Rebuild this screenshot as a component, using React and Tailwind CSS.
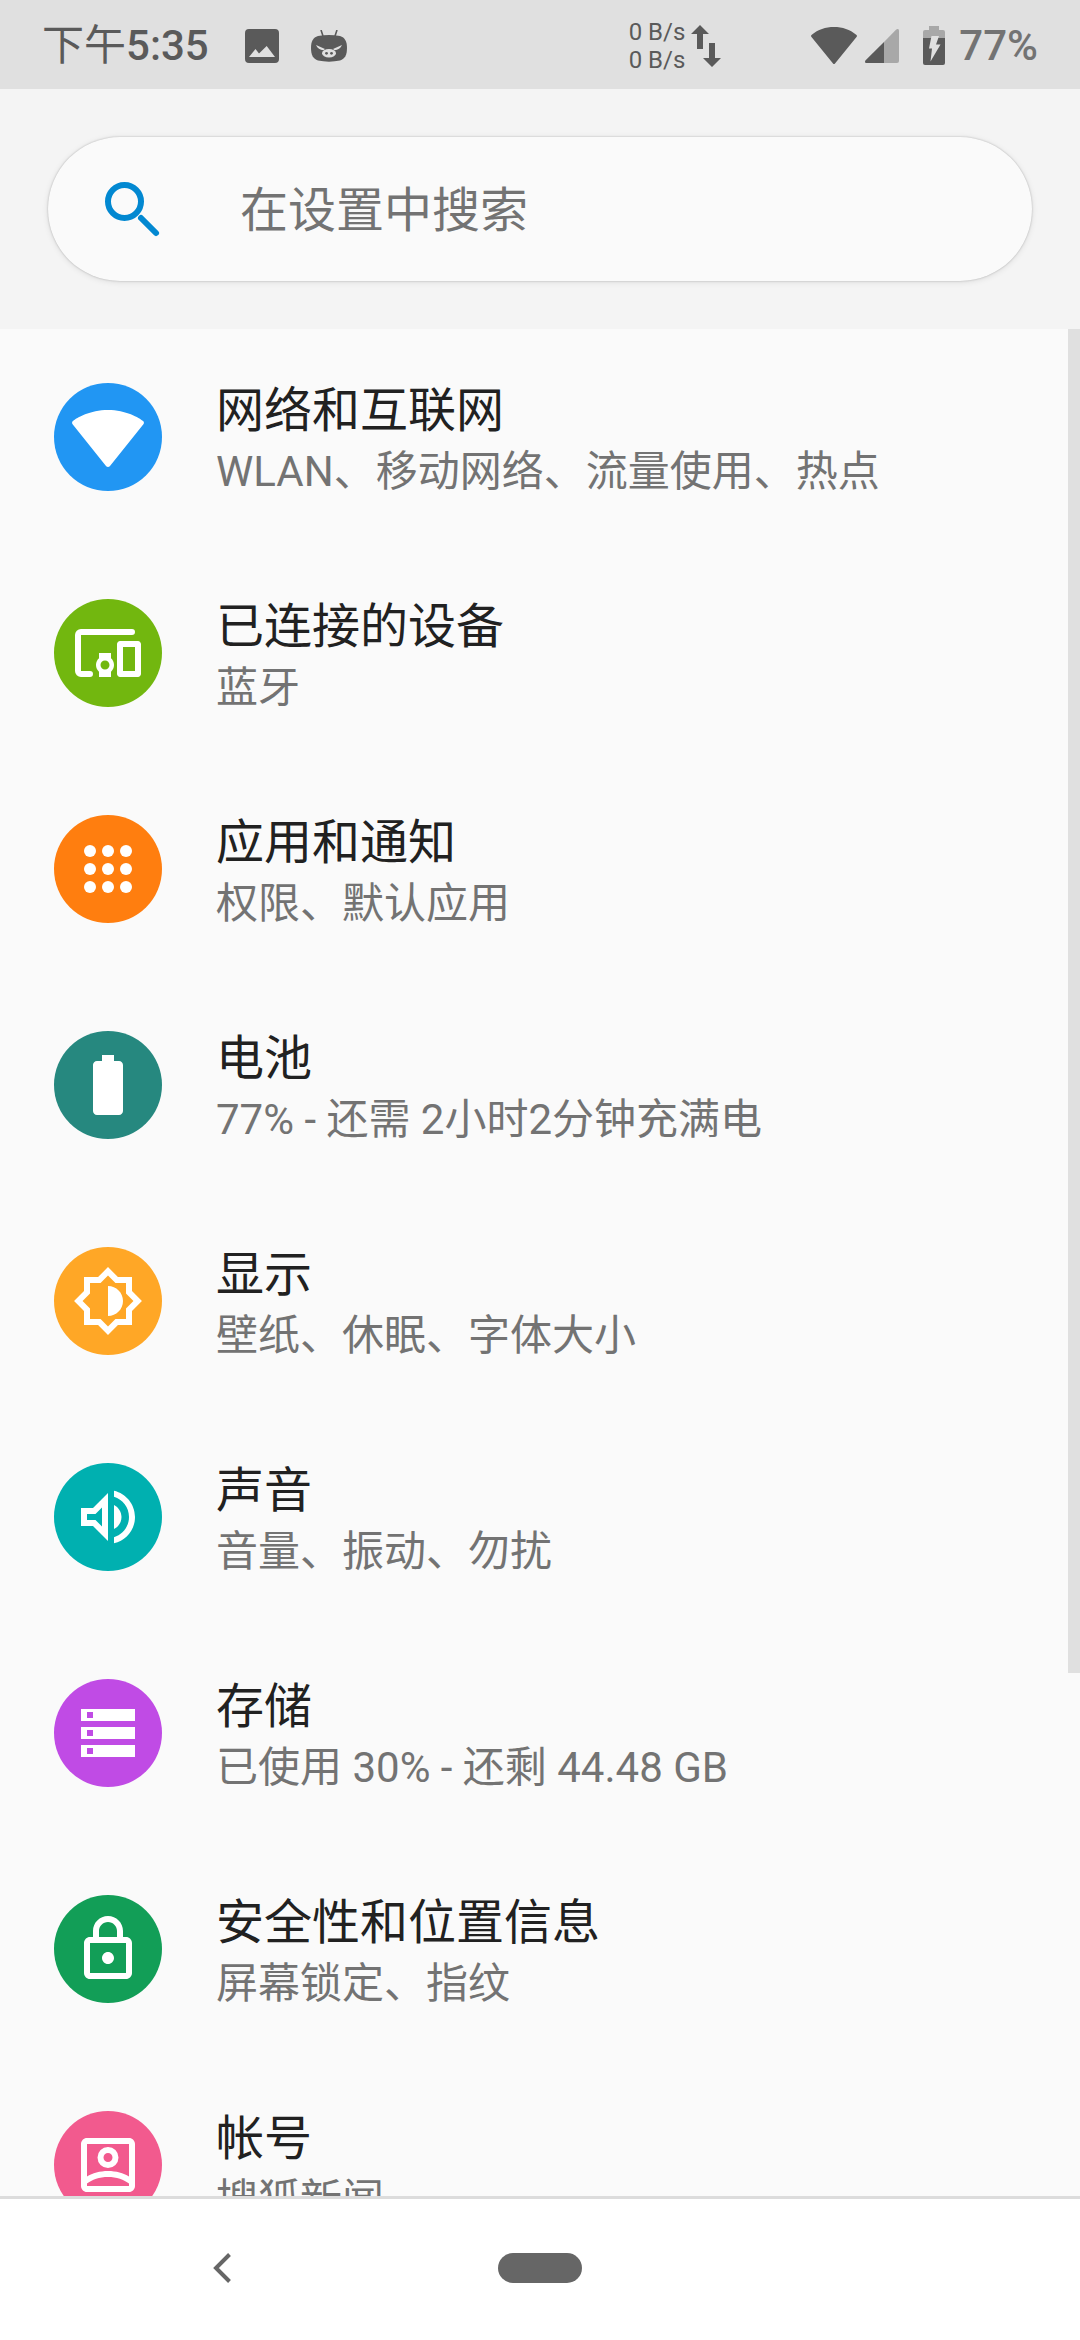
import React, { useState } from 'react';

const ICON_PATHS = {
  wifi: 'M12.6 21.75c-.3.35-.9.35-1.2 0L.2 7.75c-.3-.38-.2-.8.1-1.05C1.6 5.6 6 3 12 3s10.4 2.6 11.7 3.7c.3.25.4.67.1 1.05z',
  battery:
    'M15.67 4H14V2h-4v2H8.33C7.6 4 7 4.6 7 5.33v15.33C7 21.4 7.6 22 8.33 22h7.33c.74 0 1.34-.6 1.34-1.33V5.33C17 4.6 16.4 4 15.67 4z',
  display:
    'M20 8.69V4h-4.69L12 .69 8.69 4H4v4.69L.69 12 4 15.31V20h4.69L12 23.31 15.31 20H20v-4.69L23.31 12 20 8.69zM18 14.48V18h-3.52L12 20.48 9.52 18H6v-3.52L3.52 12 6 9.52V6h3.52L12 3.52 14.48 6H18v3.52L20.48 12 18 14.48zM12 7v10c2.76 0 5-2.24 5-5s-2.24-5-5-5z',
  sound:
    'M3 9v6h4l5 5V4L7 9H3zm7-.17v6.34L7.83 13H5v-2h2.83L10 8.83zM16.5 12c0-1.77-1.02-3.29-2.5-4.03v8.05c1.48-.73 2.5-2.25 2.5-4.02zM14 3.23v2.06c2.89.86 5 3.54 5 6.71s-2.11 5.85-5 6.71v2.06c4.01-.91 7-4.49 7-8.77s-2.99-7.86-7-8.77z',
  storage:
    'M3 4h18v4H3zM5 5v2h2V5zM3 10h18v4H3zM5 11v2h2v-2zM3 16h18v4H3zM5 17v2h2v-2z',
  lock: 'M18 8h-1V6c0-2.76-2.24-5-5-5S7 3.24 7 6v2H6c-1.1 0-2 .9-2 2v10c0 1.1.9 2 2 2h12c1.1 0 2-.9 2-2V10c0-1.1-.9-2-2-2zM9 6c0-1.66 1.34-3 3-3s3 1.34 3 3v2H9V6zm9 14H6V10h12v10zm-6-3c1.1 0 2-.9 2-2s-.9-2-2-2-2 .9-2 2 .9 2 2 2z',
  account:
    'M19 3H5c-1.1 0-2 .9-2 2v14c0 1.1.9 2 2 2h14c1.1 0 2-.9 2-2V5c0-1.1-.9-2-2-2zM5 5h14v10.8C17.2 14.7 14.7 14 12 14s-5.2.7-7 1.8zM5 19v-.8C6.6 16.9 9.2 16 12 16s5.4.9 7 2.2v.8zM12 6a3.5 3.5 0 1 0 0 7 3.5 3.5 0 0 0 0-7zm0 2a1.5 1.5 0 1 1 0 3 1.5 1.5 0 0 1 0-3z',
};

const ITEMS = [
  { icon: 'wifi', color: 'bg-[#2196f3]', title: '网络和互联网', summary: 'WLAN、移动网络、流量使用、热点' },
  { icon: 'devices', color: 'bg-[#72b70f]', title: '已连接的设备', summary: '蓝牙' },
  { icon: 'apps', color: 'bg-[#ff7e0f]', title: '应用和通知', summary: '权限、默认应用' },
  { icon: 'battery', color: 'bg-[#26887f]', title: '电池', summary: '77% - 还需 2小时2分钟充满电' },
  { icon: 'display', color: 'bg-[#ffa726]', title: '显示', summary: '壁纸、休眠、字体大小' },
  { icon: 'sound', color: 'bg-[#00b0b0]', title: '声音', summary: '音量、振动、勿扰' },
  { icon: 'storage', color: 'bg-[#c04be5]', title: '存储', summary: '已使用 30% - 还剩 44.48 GB' },
  { icon: 'lock', color: 'bg-[#129e57]', title: '安全性和位置信息', summary: '屏幕锁定、指纹' },
  { icon: 'account', color: 'bg-[#f25a8e]', title: '帐号', summary: '搜狐新闻' },
];

function ItemIcon({ name }) {
  if (name === 'devices') {
    return (
      <svg viewBox="0 0 24 24" className="size-18" fill="#fff" aria-hidden="true">
        <path d="M20 5H3c-.55 0-1 .45-1 1v12c0 .55.45 1 1 1h3" fill="none" stroke="#fff" strokeWidth="2" strokeLinecap="round" />
        <path d="M13 12H9v1.78c-.61.55-1 1.33-1 2.22s.39 1.67 1 2.22V20h4v-1.78c.61-.55 1-1.34 1-2.22s-.39-1.67-1-2.22V12zm-2 5.5c-.83 0-1.5-.67-1.5-1.5s.67-1.5 1.5-1.5 1.5.67 1.5 1.5-.67 1.5-1.5 1.5zM22 8h-6c-.5 0-1 .5-1 1v10c0 .5.5 1 1 1h6c.5 0 1-.5 1-1V9c0-.5-.5-1-1-1zm-1 10h-4v-8h4v8z" />
      </svg>
    );
  }

  if (name === 'apps') {
    return (
      <svg viewBox="0 0 24 24" className="size-18" fill="#fff" aria-hidden="true">
        {[6, 12, 18].map((cy) => [6, 12, 18].map((cx) => <circle key={`${cx}-${cy}`} cx={cx} cy={cy} r="2" />))}
      </svg>
    );
  }

  return (
    <svg viewBox="0 0 24 24" className="size-18" fill="#fff" fillRule="evenodd" aria-hidden="true">
      <path d={ICON_PATHS[name]} />
    </svg>
  );
}

function StatusBar() {
  return (
    <div className="flex h-[89px] shrink-0 items-center bg-[#e0e0e0] px-[42px] pt-0.5 text-[42px] font-medium text-[#5a5a5a]">
      <span>
        <span className="font-normal">下午</span>5:35
      </span>

      {/* Notification icons */}
      <svg viewBox="0 0 34 34" className="ml-9 size-[34px]" fill="#5a5a5a" aria-hidden="true">
        <path fillRule="evenodd" d="M4 0h26a4 4 0 0 1 4 4v26a4 4 0 0 1-4 4H4a4 4 0 0 1-4-4V4a4 4 0 0 1 4-4zM4 28h26l-8.3-11-7.7 7.500-3.500-4.500z" />
      </svg>
      <svg viewBox="0 0 36 32" className="ml-8 h-8 w-9" aria-hidden="true">
        <path d="M10 0l2 6M26 0l-2 6" stroke="#5a5a5a" strokeWidth="1.600" />
        <path d="M7 6c7-1.500 15-1.500 22 0 5 1.500 7 5.500 7 12s-2 11-7 12.500c-7 1.500-15 1.500-22 0C2 29 0 24.500 0 18S2 7.500 7 6z" fill="#5a5a5a" />
        <path d="M5 15l9 4-1.500 1.200C9 20 6.500 18.500 5 15zM31 15l-9 4 1.500 1.200c3.500-.2 6-1.700 7.500-5.200z" fill="#e0e0e0" />
        <ellipse cx="18" cy="23.300" rx="7" ry="4.200" fill="#e0e0e0" />
        <circle cx="15.500" cy="23.300" r="1.400" fill="#5a5a5a" />
        <circle cx="20.500" cy="23.300" r="1.400" fill="#5a5a5a" />
      </svg>

      {/* Network speed */}
      <div className="ml-auto flex flex-col text-2xl leading-7 font-normal">
        <span>0 B/s</span>
        <span>0 B/s</span>
      </div>
      <svg viewBox="0 0 30 42" className="ml-1.5 h-[42px] w-[30px]" fill="#5a5a5a" aria-hidden="true">
        <path d="M9 0l9 9h-6v15H6V9H0z" />
        <path d="M21 42l9-9h-6V18h-6v15h-6z" />
      </svg>

      {/* Wifi, signal, battery */}
      <svg viewBox="0 0 46 38" className="ml-[90px] h-[38px] w-[46px]" fill="#5a5a5a" aria-hidden="true">
        <path d="M24 36.500c-.6.700-1.400.700-2 0L.5 10c-.7-1-.6-1.600.3-2.300C7 2.500 14.500 0 23 0s16 2.500 22.200 7.700c.9.700 1 1.300.3 2.300z" />
      </svg>
      <svg viewBox="0 0 34 34" className="ml-2 size-[34px]" aria-hidden="true">
        <path d="M34 2v30a2 2 0 0 1-2 2H19V13L31 .7c1.500-1.200 3-.7 3 1.300z" fill="#a8a8a8" />
        <path d="M19 13v21H1.500C0 34-.5 32.500.6 31.300z" fill="#5a5a5a" />
      </svg>
      <svg viewBox="0 0 22 39" className="ml-6 h-[39px] w-[22px]" aria-hidden="true">
        <path d="M6 0h10v4h4a2 2 0 0 1 2 2v6H0V6a2 2 0 0 1 2-2h4z" fill="#a8a8a8" />
        <path d="M0 12h22v25a2 2 0 0 1-2 2H2a2 2 0 0 1-2-2z" fill="#5a5a5a" />
        <path d="M8.500 10H16l-3 8.500h4.500L7.500 35.500 9 22.500H6z" fill="#e0e0e0" />
      </svg>
      <span className="ml-3.5 text-[#737373]">77%</span>
    </div>
  );
}

function SearchHeader({ query, onChange }) {
  return (
    <header className="shrink-0 bg-[#f4f4f4] p-12">
      <label className="flex h-36 items-center rounded-full bg-[#fafafa] pl-12 shadow-[0_0_2px_rgba(0,0,0,0.25),0_1px_6px_rgba(0,0,0,0.1)]">
        <svg viewBox="0 0 72 72" className="size-18 shrink-0" fill="none" stroke="#0288d1" strokeWidth="6" aria-hidden="true">
          <circle cx="28.500" cy="28.500" r="16.500" />
          <path d="M45 45l15 15" strokeLinecap="round" />
        </svg>
        <input
          type="text"
          aria-label="在设置中搜索"
          placeholder="在设置中搜索"
          value={query}
          onChange={(e) => onChange(e.target.value)}
          className="ml-18 min-w-0 flex-1 bg-transparent pt-0.5 text-5xl text-[#212121] outline-none placeholder:text-[#737373]"
        />
      </label>
    </header>
  );
}

function SettingsItem({ icon, color, title, summary }) {
  return (
    <li>
      <a href="#" className="flex h-54 items-center gap-[54px] px-[54px]">
        <span className={`flex size-27 shrink-0 items-center justify-center rounded-full ${color}`}>
          <ItemIcon name={icon} />
        </span>
        <span className="flex min-w-0 flex-col pt-2">
          <span className="text-5xl leading-[62px] text-[#212121]">{title}</span>
          <span className="text-[42px] leading-[60px] text-[#737373]">{summary}</span>
        </span>
      </a>
    </li>
  );
}

export default function App() {
  const [query, setQuery] = useState('');

  return (
    <div className="flex h-screen flex-col overflow-hidden bg-[#fafafa] font-[Roboto,'Noto_Sans_CJK_SC',sans-serif]">
      <StatusBar />
      <SearchHeader query={query} onChange={setQuery} />

      <main className="relative min-h-0 flex-1 overflow-hidden">
        <ul>
          {ITEMS.map((item) => (
            <SettingsItem key={item.icon} {...item} />
          ))}
        </ul>
        {/* Scroll thumb */}
        <div className="absolute top-0 right-0 h-[72%] w-3 bg-[#e0e0e0]" />
      </main>

      {/* System navigation */}
      <nav className="grid h-36 shrink-0 grid-cols-[1fr_auto_1fr] items-center border-t-3 border-[#dcdcdc] bg-white pb-1">
        <button type="button" aria-label="返回" className="ml-[213px] justify-self-start">
          <svg viewBox="0 0 18 30" className="block h-[30px] w-[18px]" fill="none" stroke="#666" strokeWidth="4" aria-hidden="true">
            <path d="M16.500 1.500L3 15l13.500 13.500" />
          </svg>
        </button>
        <button type="button" aria-label="主屏幕" className="h-[30px] w-21 rounded-full bg-[#666]" />
      </nav>
    </div>
  );
}
